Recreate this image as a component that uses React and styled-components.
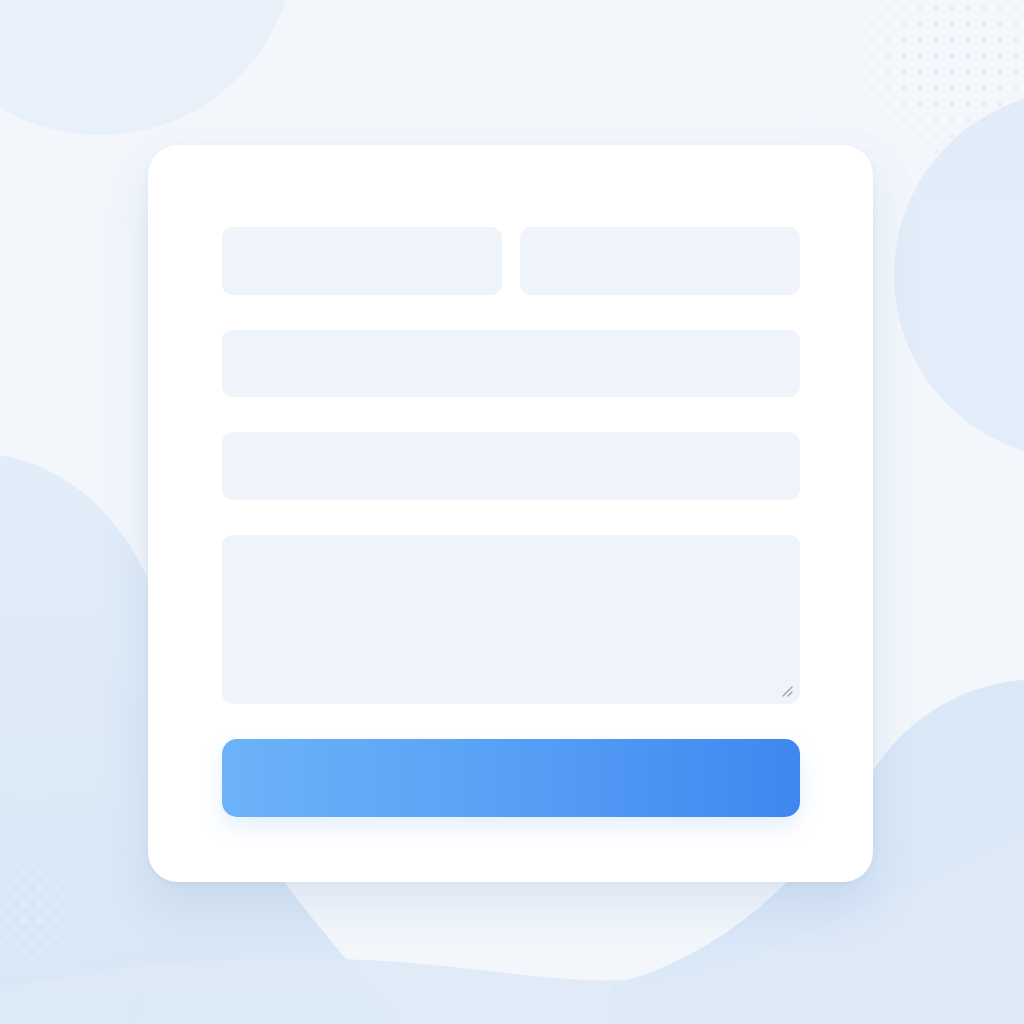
import React from "react";
import styled, { createGlobalStyle } from "styled-components";

const GlobalStyle = createGlobalStyle`
  * { box-sizing: border-box; }
  html, body { margin: 0; padding: 0; }
  body {
    font-family: Inter, "Noto Sans", sans-serif;
    background: #f3f7fc;
  }
`;

export const Page = styled.div`
  position: relative;
  width: 1024px;
  height: 1024px;
  overflow: hidden;
  background: #f3f7fc;
  padding: 145px 0 0 148px;
`;

const Backdrop = styled.svg`
  position: absolute;
  inset: 0;
  width: 1024px;
  height: 1024px;
  z-index: 0;
`;

export const Card = styled.form`
  position: relative;
  z-index: 1;
  width: 725px;
  height: 737px;
  background: #ffffff;
  border-radius: 30px;
  padding: 82px 73px 64px 74px;
  display: flex;
  flex-direction: column;
  gap: 35px;
  box-shadow: 0 22px 50px rgba(70, 110, 170, 0.13), 0 2px 6px rgba(70, 110, 170, 0.06);
`;

export const Row = styled.div`
  display: grid;
  grid-template-columns: 1fr 1fr;
  gap: 18px;
`;

export const Field = styled.div`
  height: ${(p) => p.h || 68}px;
  background: #eff3fa;
  border-radius: 11px;
  position: relative;
`;

const Grip = styled.svg`
  position: absolute;
  right: 6px;
  bottom: 6px;
`;

export const Button = styled.button`
  height: 78px;
  border: none;
  border-radius: 15px;
  background: linear-gradient(90deg, #6db3f9 0%, #5aa2f6 45%, #3f87ef 100%);
  box-shadow: 0 10px 22px rgba(70, 140, 235, 0.14);
  cursor: pointer;
`;

const Dots = ({ id, color }) => (
  <pattern id={id} width="16" height="16" patternUnits="userSpaceOnUse">
    <circle cx="8" cy="8" r="1.7" fill={color} />
  </pattern>
);

const Decor = () => (
  <Backdrop viewBox="0 0 1024 1024">
    <defs>
      <Dots id="dotsGrey" color="#d5deeb" />
      <Dots id="dotsWhite" color="#f1f6fd" />
      <radialGradient id="fadeTR" cx="0.7" cy="0.3" r="0.8">
        <stop offset="0" stopColor="#fff" stopOpacity="1" />
        <stop offset="1" stopColor="#fff" stopOpacity="0" />
      </radialGradient>
      <radialGradient id="fadeBL" cx="0.2" cy="0.55" r="0.8">
        <stop offset="0" stopColor="#fff" stopOpacity="1" />
        <stop offset="1" stopColor="#fff" stopOpacity="0" />
      </radialGradient>
      <mask id="maskTR">
        <rect x="795" y="0" width="229" height="200" fill="url(#fadeTR)" />
      </mask>
      <mask id="maskBL">
        <rect x="0" y="770" width="160" height="254" fill="url(#fadeBL)" />
      </mask>
      <linearGradient id="leftBlob" x1="0" y1="0" x2="0" y2="1">
        <stop offset="0" stopColor="#e2edf9" />
        <stop offset="1" stopColor="#d8e6f6" />
      </linearGradient>
    </defs>

    <circle cx="100" cy="-60" r="195" fill="#e8f0fa" />
    <circle cx="1078" cy="275" r="184" fill="#e3edf9" />

    <rect x="795" y="0" width="229" height="200" fill="url(#dotsGrey)" mask="url(#maskTR)" />

    <path
      d="M0 455 C 90 470 150 550 172 650 L 210 770 C 265 870 340 950 400 1024 L 0 1024 Z"
      fill="url(#leftBlob)"
    />
    <path
      d="M1024 680 C 960 684 905 720 870 775 C 800 890 710 960 610 985 L 610 1024 L 1024 1024 Z"
      fill="#dae8f8"
    />
    <path
      d="M0 990 C 110 962 260 952 400 962 C 500 970 570 985 640 979 C 730 970 820 930 900 890 L 1024 830 L 1024 1024 L 0 1024 Z"
      fill="#dde9f7"
      opacity="0.85"
    />

    <rect x="0" y="770" width="160" height="254" fill="url(#dotsWhite)" mask="url(#maskBL)" />
  </Backdrop>
);

const App = () => {
  return (
    <Page>
      <GlobalStyle />
      <Decor />
      <Card onSubmit={(e) => e.preventDefault()}>
        <Row>
          <Field />
          <Field />
        </Row>
        <Field h={67} />
        <Field />
        <Field h={169}>
          <Grip width="14" height="14" viewBox="0 0 14 14">
            <path d="M3 12 L12 3 M8 12 L12 8" stroke="#9aa3ae" strokeWidth="1.3" strokeLinecap="round" />
          </Grip>
        </Field>
        <Button type="submit" />
      </Card>
    </Page>
  );
};

export default App;
